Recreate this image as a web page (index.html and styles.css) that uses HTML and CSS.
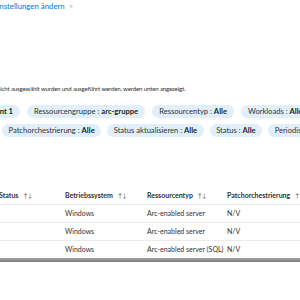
FILE: index.html
```html
<!DOCTYPE html>
<html lang="de">
<head>
    <meta charset="UTF-8">
    <meta name="viewport" content="width=device-width, initial-scale=1.0">
    <title>Updates</title>
    <link rel="stylesheet" href="styles.css">
</head>
<body>
    <div class="page">
        <a class="link" href="#">Einstellungen ändern <span class="chev">&gt;</span></a>

        <p class="desc">nicht ausgewählt wurden und ausgeführt werden, werden unten angezeigt.</p>

        <div class="filters">
            <div class="row">
                <div class="lead">
                    <span class="pill">Abonnement : <b>Abonnement 1</b></span>
                </div>
                <span class="pill">Ressourcengruppe : <b>arc-gruppe</b></span>
                <span class="pill">Ressourcentyp : <b>Alle</b></span>
                <span class="pill">Workloads : <b>Alle</b></span>
            </div>
            <div class="row row-2">
                <span class="pill">Patchorchestrierung : <b>Alle</b></span>
                <span class="pill">Status aktualisieren : <b>Alle</b></span>
                <span class="pill">Status : <b>Alle</b></span>
                <span class="pill">Periodische Bewertung : <b>Alle</b></span>
            </div>
        </div>

        <div class="table">
            <div class="tr th">
                <div class="c c1">Status <span class="sort">↑↓</span></div>
                <div class="c c2">Betriebssystem <span class="sort">↑↓</span></div>
                <div class="c c3">Ressourcentyp <span class="sort">↑↓</span></div>
                <div class="c c4">Patchorchestrierung <span class="sort">↑↓</span></div>
            </div>
            <div class="tr">
                <div class="c c1"></div>
                <div class="c c2">Windows</div>
                <div class="c c3">Arc-enabled server</div>
                <div class="c c4">N/V</div>
            </div>
            <div class="tr">
                <div class="c c1"></div>
                <div class="c c2">Windows</div>
                <div class="c c3">Arc-enabled server</div>
                <div class="c c4">N/V</div>
            </div>
            <div class="tr">
                <div class="c c1"></div>
                <div class="c c2">Windows</div>
                <div class="c c3">Arc-enabled server (SQL)</div>
                <div class="c c4">N/V</div>
            </div>
        </div>
        <div class="scrollbar"></div>
    </div>
</body>
</html>
```

FILE: styles.css
```css
body {
    margin: 0;
    background-color: #fff;
    font-family: Lato, "Open Sans", sans-serif;
    color: #323130;
    overflow: hidden;
}
.page {
    width: 300px;
    height: 300px;
    overflow: hidden;
}
.link {
    display: block;
    margin: 0 0 0 -7px;
    height: 12px;
    font-size: 7.8px;
    line-height: 12px;
    color: #0078d4;
    text-decoration: none;
    white-space: nowrap;
}
.chev {
    color: #a19f9d;
    margin-left: 2px;
}
.desc {
    margin: 71px 0 0 -3px;
    font-size: 6.1px;
    letter-spacing: -0.15px;
    line-height: 12px;
    white-space: nowrap;
}
.filters {
    margin-top: 10px;
}
.row {
    display: flex;
    gap: 7px;
    white-space: nowrap;
    margin-bottom: 6px;
}
.lead {
    flex: none;
    width: 20px;
    display: flex;
    justify-content: flex-end;
}
.row-2 {
    margin-left: 2px;
    gap: 6px;
}
.pill {
    flex: none;
    height: 13px;
    line-height: 13px;
    padding: 0 7px;
    border-radius: 7px;
    background-color: #e1effa;
    font-size: 7.6px;
}
.pill b {
    font-weight: 700;
    color: #201f1e;
}
.row-2 .pill {
    padding: 0 6.5px;
}
.table {
    margin-top: 50px;
    margin-left: -1px;
}
.tr {
    display: flex;
    height: 17px;
    line-height: 17px;
    border-bottom: 1px solid #edebe9;
    font-size: 7px;
    white-space: nowrap;
}
.th {
    font-weight: 700;
}
.c {
    flex: none;
}
.c1 { width: 66px; }
.c2 { width: 82px; }
.c3 { width: 80px; }
.c4 { width: 90px; }
.sort {
    font-weight: 400;
    color: #605e5c;
    margin-left: 3px;
    font-size: 6px;
}
.scrollbar {
    margin-top: -1px;
    height: 4px;
    background: linear-gradient(#a8a8a8, #7a7a7a);
}
```
